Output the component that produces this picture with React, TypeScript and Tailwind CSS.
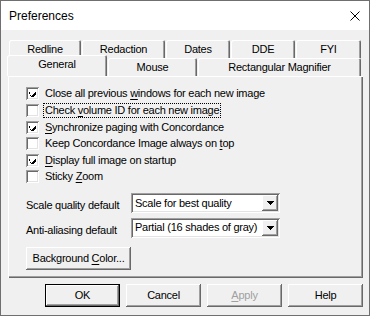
import React from "react";

const raised =
  "shadow-[inset_-1px_-1px_0_#696969,inset_1px_1px_0_#ffffff,inset_-2px_-2px_0_#a0a0a0,inset_2px_2px_0_#f0f0f0]";
const sunken =
  "shadow-[inset_1px_1px_0_#a0a0a0,inset_-1px_-1px_0_#ffffff,inset_2px_2px_0_#696969,inset_-2px_-2px_0_#e3e3e3]";

function Check({ checked }: { checked: boolean }) {
  return (
    <div className={`w-[13px] h-[13px] bg-white shrink-0 flex items-center justify-center ${sunken}`}>
      {checked && (
        <svg width="7" height="7" viewBox="0 0 7 7" shapeRendering="crispEdges">
          <path d="M0 2h1v3h1v1h1v-1h1v-1h1v-1h1v-1h1v3h-1v1h-1v1h-1v1h-1v-1h-1v-1h-1z" fill="#000" />
        </svg>
      )}
    </div>
  );
}

function U({ children }: { children: React.ReactNode }) {
  return <span className="underline underline-offset-[2px] decoration-[1px]">{children}</span>;
}

function Row({
  checked,
  h,
  children,
  focus,
}: {
  checked: boolean;
  h: string;
  children: React.ReactNode;
  focus?: boolean;
}) {
  return (
    <div className={`flex items-center ${h}`}>
      <Check checked={checked} />
      <div
        className={`ml-[5px] leading-[13px] px-[1px] ${
          focus ? "outline outline-1 outline-dotted outline-black" : ""
        }`}
      >
        {children}
      </div>
    </div>
  );
}

function Combo({ text }: { text: string }) {
  return (
    <div className={`w-[149px] h-[20px] bg-white flex items-stretch p-[2px] ${sunken}`}>
      <div className="flex-1 flex items-center pl-[2px] leading-[13px] whitespace-nowrap">{text}</div>
      <div className={`w-[16px] bg-[#f0f0f0] flex items-center justify-center ${raised}`}>
        <svg width="7" height="4" viewBox="0 0 7 4" shapeRendering="crispEdges">
          <path d="M0 0h7v1h-1v1h-1v1h-1v1h-1v-1h-1v-1h-1v-1h-1z" fill="#000" />
        </svg>
      </div>
    </div>
  );
}

function Btn({
  children,
  w,
  def,
  disabled,
}: {
  children: React.ReactNode;
  w: string;
  def?: boolean;
  disabled?: boolean;
}) {
  return (
    <div
      className={`${w} h-[23px] flex items-center justify-center bg-[#f0f0f0] ${
        def ? "border border-black" : ""
      } ${raised} ${disabled ? "text-[#a0a0a0]" : "text-black"}`}
    >
      {children}
    </div>
  );
}

const tabShadow =
  "shadow-[inset_1px_1px_0_#ffffff,inset_-1px_0_0_#696969,inset_-2px_0_0_#a0a0a0]";

function Tab({ w, label, selected }: { w: string; label: string; selected?: boolean }) {
  return (
    <div
      className={`${w} ${
        selected ? "h-[21px] relative z-10 pb-[3px]" : "h-[18px]"
      } bg-[#f0f0f0] rounded-t-[2px] flex items-center justify-center leading-[13px] ${tabShadow}`}
    >
      {label}
    </div>
  );
}

export default function App() {
  return (
    <div
      className="w-[370px] h-[316px] border border-[#6f6f6f] bg-[#f0f0f0] flex flex-col text-[11px] text-black tracking-[-0.25px]"
      style={{ fontFamily: '"Liberation Sans", Arial, sans-serif' }}
    >
      <div className="h-[29px] bg-white flex items-center justify-between pl-[8px] pr-[9px] shrink-0">
        <span className="text-[12px] tracking-[0px] mt-[1px]">Preferences</span>
        <svg width="10" height="10" viewBox="0 0 10 10">
          <path d="M0.5 0.5L9.5 9.5M9.5 0.5L0.5 9.5" stroke="#000" strokeWidth="1" />
        </svg>
      </div>

      <div className="mt-[10px] flex ml-[8px] gap-[1px]">
        <Tab w="w-[72px]" label="Redline" />
        <Tab w="w-[83px]" label="Redaction" />
        <Tab w="w-[64px]" label="Dates" />
        <Tab w="w-[64px]" label="DDE" />
        <Tab w="w-[65px]" label="FYI" />
      </div>
      <div className="flex ml-[6px] h-[18px] items-end gap-[1px]">
        <Tab w="w-[100px]" label="General" selected />
        <Tab w="w-[89px]" label="Mouse" />
        <Tab w="w-[163px]" label="Rectangular Magnifier" />
      </div>

      <div
        className={`ml-[7px] w-[355px] h-[202px] shrink-0 flex flex-col pl-[18px] pt-[9px] shadow-[inset_1px_1px_0_#ffffff,inset_-1px_-1px_0_#696969,inset_-2px_-2px_0_#a0a0a0]`}
      >
        <Row checked h="h-[16px]">
          Close all previous <U>w</U>indows for each new image
        </Row>
        <Row checked={false} h="h-[18px]" focus>
          Check <U>v</U>olume ID for each new image
        </Row>
        <Row checked h="h-[16px]">
          <U>S</U>ynchronize paging with Concordance
        </Row>
        <Row checked={false} h="h-[17px]">
          Keep Concordance Image always on <U>t</U>op
        </Row>
        <Row checked h="h-[16px]">
          <U>D</U>isplay full image on startup
        </Row>
        <Row checked={false} h="h-[16px]">
          Sticky <U>Z</U>oom
        </Row>

        <div className="flex items-center mt-[9px]">
          <div className="w-[105px] mt-[4px]">Scale quality default</div>
          <Combo text="Scale for best quality" />
        </div>
        <div className="flex items-center mt-[4px]">
          <div className="w-[105px] mt-[4px]">Anti-aliasing default</div>
          <Combo text="Partial (16 shades of gray)" />
        </div>
        <div className="mt-[9px]">
          <Btn w="w-[105px]">
            <span>
              Background <U>C</U>olor...
            </span>
          </Btn>
        </div>
      </div>

      <div className="flex ml-[44px] mt-[6px] gap-[6px]">
        <Btn w="w-[75px]" def>
          OK
        </Btn>
        <Btn w="w-[75px]">Cancel</Btn>
        <Btn w="w-[75px]" disabled>
          <span>
            <U>A</U>pply
          </span>
        </Btn>
        <Btn w="w-[75px]">Help</Btn>
      </div>
    </div>
  );
}
